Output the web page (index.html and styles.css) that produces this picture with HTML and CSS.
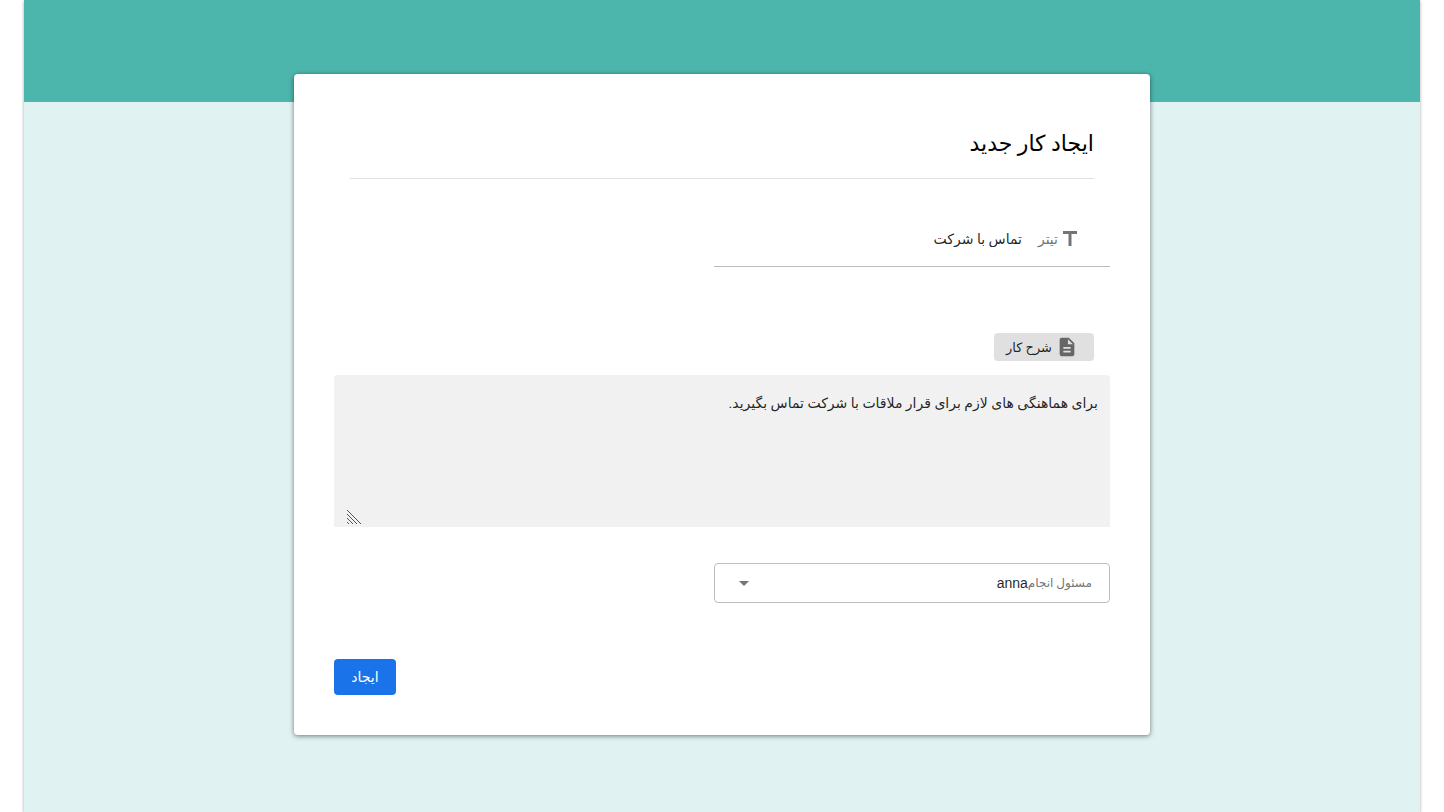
FILE: index.html
```html
<!DOCTYPE html>
<html lang="fa" dir="rtl">
<head>
<meta charset="utf-8">
<title>ایجاد کار جدید</title>
<link rel="stylesheet" href="styles.css">
</head>
<body>
<div class="page">
  <main class="card">
    <h1 class="title">ایجاد کار جدید</h1>
    <form class="form">
      <div class="field">
        <svg class="icon" viewBox="0 0 24 24" aria-hidden="true"><path d="M5 4v3h5.500v12h3V7H19V4z"/></svg>
        <label class="field-label" for="subject">تیتر</label>
        <input class="field-input" id="subject" type="text" value="تماس با شرکت">
      </div>
      <label class="chip" for="details">
        <svg class="icon chip-icon" viewBox="0 0 24 24" aria-hidden="true"><path d="M14 2H6c-1.100 0-2 .9-2 2v16c0 1.100.9 2 2 2h12c1.100 0 2-.9 2-2V8zm2 16H8v-2h8zm0-4H8v-2h8zm-3-5V3.500L18.500 9z"/></svg>
        شرح کار
      </label>
      <div class="area">
        <textarea class="area-input" id="details">برای هماهنگی های لازم برای قرار ملاقات با شرکت تماس بگیرید.</textarea>
        <svg class="grip" viewBox="0 0 16 16" aria-hidden="true"><path d="M1 1l14 14M1 5l10 10M1 9l6 6M1 13l2 2"/></svg>
      </div>
      <div class="picker">
        <label class="picker-label" for="owner">مسئول انجام</label>
        <select class="picker-select" id="owner"><option>anna</option></select>
        <svg class="arrow" viewBox="0 0 10 5" aria-hidden="true"><path d="M0 0h10L5 5z"/></svg>
      </div>
      <button class="submit" type="button">ایجاد</button>
    </form>
  </main>
</div>
</body>
</html>
```
FILE: styles.css
```css
* { box-sizing: border-box; }
body {
  margin: 0;
  background: #fff;
  color: rgba(0, 0, 0, .87);
  font-family: Roboto, "DejaVu Sans", sans-serif;
  font-size: 14px;
}
.page {
  min-height: 100vh;
  margin: 0 24px;
  padding: 74px 16px;
  background: linear-gradient(#4db6ac 102px, #e0f2f1 102px);
  box-shadow: 0 1px 3px rgba(0, 0, 0, .35);
}
.card {
  max-width: 856px;
  margin: 0 auto;
  padding: 40px;
  background: #fff;
  border-radius: 4px;
  box-shadow: 0 1px 5px rgba(0, 0, 0, .5);
}
.title {
  margin: 0 16px 32px;
  padding: 8px 0 12px;
  border-bottom: 1px solid #e0e0e0;
  color: #000;
  font-size: 22px;
  font-weight: 400;
  line-height: 44px;
}
.form { display: flex; flex-direction: column; align-items: flex-start; }
.field {
  display: flex;
  align-items: center;
  width: 51%;
  height: 56px;
  margin-bottom: 66px;
  padding: 0 28px;
  border-bottom: 1px solid #bdbdbd;
}
.icon { width: 24px; height: 24px; fill: #757575; }
.field-label { margin-left: 16px; color: #757575; }
.field-input {
  flex: 1;
  min-width: 0;
  padding: 0;
  border: 0;
  background: none;
  color: inherit;
  font: inherit;
  outline: 0;
}
.chip {
  display: flex;
  align-items: center;
  gap: 4px;
  height: 28px;
  margin: 0 16px 14px;
  padding: 0 16px 0 12px;
  border-radius: 4px;
  background: #e0e0e0;
  font-size: 13px;
}
.chip-icon { width: 22px; height: 22px; fill: #666; }
.area {
  position: relative;
  width: 100%;
  height: 152px;
  margin-bottom: 36px;
  border-radius: 4px 4px 0 0;
  background: #f1f1f1;
}
.area-input {
  display: block;
  width: 100%;
  height: 100%;
  padding: 16px 12px;
  border: 0;
  background: none;
  color: inherit;
  font: inherit;
  line-height: 24px;
  outline: 0;
  resize: none;
}
.grip { position: absolute; left: 12px; bottom: 2px; width: 16px; height: 16px; fill: none; stroke: #555; }
.picker {
  display: flex;
  align-items: center;
  width: 51%;
  height: 40px;
  margin-bottom: 56px;
  padding: 0 17px 0 24px;
  border: 1px solid #bdbdbd;
  border-radius: 4px;
}
.picker-label { color: #757575; font-size: 12px; }
.picker-select {
  flex: 1;
  padding: 0;
  border: 0;
  background: none;
  color: inherit;
  font-family: "Liberation Sans", sans-serif;
  font-size: 14px;
  appearance: none;
}
.arrow { width: 10px; height: 5px; fill: #757575; }
.submit {
  align-self: flex-end;
  min-width: 62px;
  height: 36px;
  padding: 0 16px;
  border: 0;
  border-radius: 4px;
  background: #1a73e8;
  color: #fff;
  font: inherit;
}
```
